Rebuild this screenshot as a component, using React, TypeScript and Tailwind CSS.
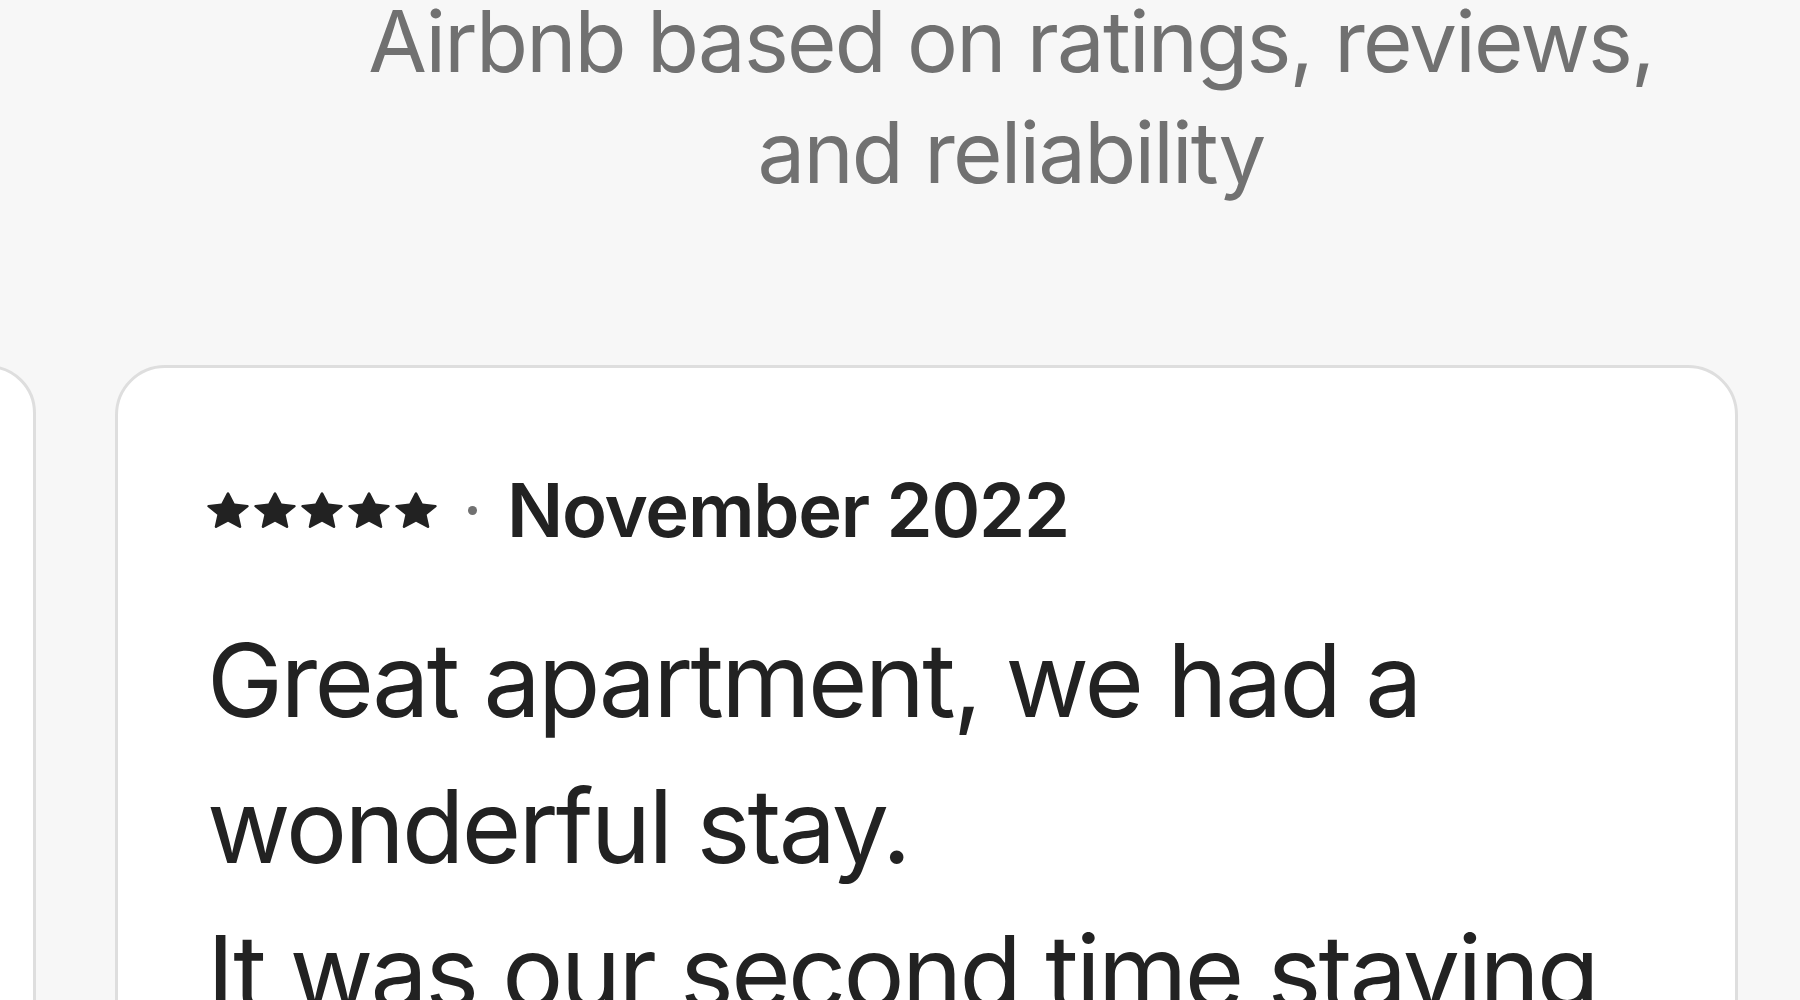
import React from "react";

function Star() {
  return (
    <svg viewBox="0 0 32 32" width="42" height="38" preserveAspectRatio="none" className="block fill-[#222222]">
      <path d="M15.1 1.58l-4.13 8.88-9.86 1.27a1 1 0 0 0-.54 1.74l7.3 6.57-1.97 9.85a1 1 0 0 0 1.48 1.06l8.62-5 8.63 5a1 1 0 0 0 1.48-1.06l-1.97-9.85 7.3-6.57a1 1 0 0 0-.55-1.73l-9.86-1.28-4.12-8.88a1 1 0 0 0-1.82 0z" />
    </svg>
  );
}

export default function App() {
  return (
    <div className="w-[1800px] h-[1000px] overflow-hidden bg-[#f7f7f7] font-['Inter','Noto_Sans',sans-serif] text-[#222222]">
      <div className="mt-[-14px] pl-[222px] text-center text-[85px] leading-[111px] tracking-[-1.8px] text-[#717171] whitespace-nowrap">
        <div>Airbnb based on ratings, reviews,</div>
        <div>and reliability</div>
      </div>
      <div className="mt-[157px] flex gap-[79px]">
        <div className="ml-[-364px] w-[400px] h-[800px] shrink-0 rounded-[48px] border-[3px] border-[#dedede] bg-white" />
        <div className="w-[1623px] h-[800px] shrink-0 rounded-[50px] border-[3px] border-[#dedede] bg-white pt-[105px] pl-[89px]">
          <div className="flex items-center">
            <div className="flex gap-[5px]">
              <Star />
              <Star />
              <Star />
              <Star />
              <Star />
            </div>
            <div className="ml-[31px] mr-[30px] w-[9px] h-[9px] rounded-full bg-[#717171]" />
            <div className="text-[74px] leading-none font-semibold tracking-[-1.2px]">November 2022</div>
          </div>
          <div className="mt-[60px] text-[102px] leading-[146px] tracking-[-2.7px] whitespace-nowrap">
            <div>Great apartment, we had a</div>
            <div>wonderful stay.</div>
            <div>It was our second time staying</div>
          </div>
        </div>
      </div>
    </div>
  );
}
